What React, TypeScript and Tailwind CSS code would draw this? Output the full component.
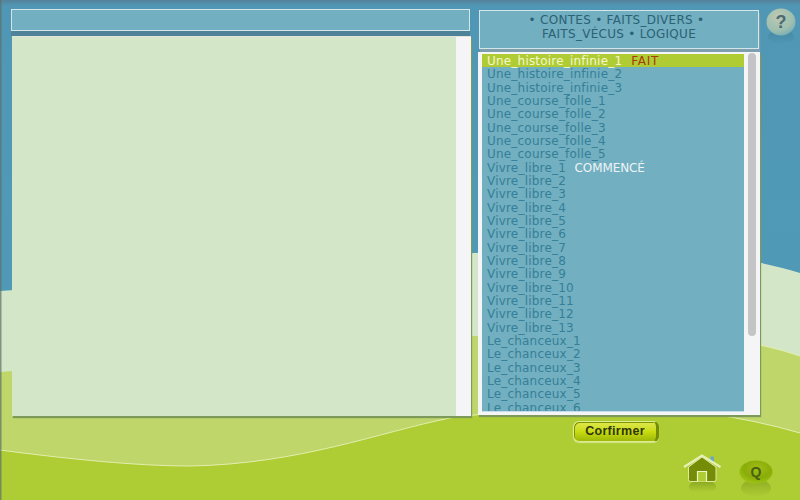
const items = [
  "Une_histoire_infinie_2","Une_histoire_infinie_3","Une_course_folle_1","Une_course_folle_2","Une_course_folle_3","Une_course_folle_4","Une_course_folle_5",
];
const items2 = [
  "Vivre_libre_2","Vivre_libre_3","Vivre_libre_4","Vivre_libre_5","Vivre_libre_6","Vivre_libre_7","Vivre_libre_8","Vivre_libre_9","Vivre_libre_10","Vivre_libre_11","Vivre_libre_12","Vivre_libre_13",
  "Le_chanceux_1","Le_chanceux_2","Le_chanceux_3","Le_chanceux_4","Le_chanceux_5","Le_chanceux_6",
];
const row = "h-[13.33px] leading-[15.5px] pl-[5px] whitespace-nowrap tracking-[0.2px]";

function Background() {
  return (
    <svg className="absolute inset-0" width="800" height="500" viewBox="0 0 800 500">
      <defs>
        <linearGradient id="top" x1="0" y1="0" x2="0" y2="1">
          <stop offset="0" stopColor="#55839a" />
          <stop offset="0.012" stopColor="#5097b5" />
          <stop offset="1" stopColor="#4f9bb9" />
        </linearGradient>
        <linearGradient id="edge" gradientUnits="userSpaceOnUse" x1="700" y1="0" x2="760" y2="0">
          <stop offset="0" stopColor="#e3eeae" stopOpacity="0" />
          <stop offset="1" stopColor="#e3eeae" stopOpacity="1" />
        </linearGradient>
      </defs>
      <rect width="800" height="500" fill="url(#top)" />
      <path d="M0 291 C160 280 330 258 475 253 C600 248 710 245 800 273 V500 H0 Z" fill="#d3e6c8" />
      <path d="M0 372 C160 360 330 337 475 336 C600 336 710 325 800 356 V500 H0 Z" fill="#bfd66a" />
      <path d="M475 336 C600 336 710 325 800 356" fill="none" stroke="url(#edge)" strokeWidth="1" />
      <path d="M0 450 C90 462 150 466 190 466 C300 464 380 432 450 418 C560 404 680 398 800 433 V500 H0 Z" fill="#aecd34" />
      <path d="M0 450 C90 462 150 466 190 466 C300 464 380 432 450 418 C560 404 680 398 800 433" fill="none" stroke="#e3eeae" strokeWidth="1" />
      <rect x="0" y="0" width="1.5" height="500" fill="#5f6f66" opacity="0.7" />
    </svg>
  );
}

function HelpIcon() {
  return (
    <svg width="34" height="40" viewBox="0 0 34 40" className="block">
      <defs>
        <radialGradient id="help" cx="0.4" cy="0.3" r="0.8">
          <stop offset="0" stopColor="#bcc9b3" />
          <stop offset="0.65" stopColor="#9dbfb0" />
          <stop offset="1" stopColor="#6fa7b5" />
        </radialGradient>
        <linearGradient id="helpShadow" x1="0" y1="0" x2="0" y2="1">
          <stop offset="0" stopColor="#41839e" stopOpacity="0.8" />
          <stop offset="1" stopColor="#41839e" stopOpacity="0" />
        </linearGradient>
      </defs>
      <ellipse cx="17" cy="29" rx="13" ry="7" fill="url(#helpShadow)" />
      <ellipse cx="17" cy="14" rx="14.5" ry="13.5" fill="url(#help)" />
      <text x="17" y="19.5" textAnchor="middle" fontSize="18" fontWeight="700" fill="#4c6a72" fontFamily="Liberation Sans, sans-serif">?</text>
    </svg>
  );
}

function HomeIcon() {
  return (
    <svg width="38" height="40" viewBox="0 0 38 40" className="block">
      <defs>
        <linearGradient id="homeShadow" x1="0" y1="0" x2="0" y2="1">
          <stop offset="0" stopColor="#8aa720" stopOpacity="0.9" />
          <stop offset="1" stopColor="#8aa720" stopOpacity="0" />
        </linearGradient>
      </defs>
      <rect x="6" y="28" width="27" height="10" rx="5" fill="url(#homeShadow)" />
      <rect x="27.5" y="2.5" width="3.5" height="5" fill="#6fa9c0" />
      <path d="M5.5 13 V25.5 Q5.5 27.5 7.5 27.5 H31 Q33 27.5 33 25.5 V13 L19 3 Z" fill="#748c06" stroke="#dfeaa0" strokeWidth="1" />
      <path d="M1 13 L19 1.5 L37.5 13" fill="none" stroke="#e6efb8" strokeWidth="2.2" />
      <path d="M14.5 27.5 V17.5 H23.5 V27.5" fill="#aecd34" stroke="#eef4c8" strokeWidth="1.2" />
    </svg>
  );
}

function QIcon() {
  return (
    <svg width="34" height="40" viewBox="0 0 34 40" className="block">
      <defs>
        <radialGradient id="q" cx="0.55" cy="0.35" r="0.7">
          <stop offset="0" stopColor="#a0bd18" />
          <stop offset="0.6" stopColor="#8aac08" />
          <stop offset="1" stopColor="#a2c81a" />
        </radialGradient>
        <linearGradient id="qShadow" x1="0" y1="0" x2="0" y2="1">
          <stop offset="0" stopColor="#8aa720" stopOpacity="0.9" />
          <stop offset="1" stopColor="#8aa720" stopOpacity="0" />
        </linearGradient>
      </defs>
      <ellipse cx="17" cy="28" rx="15" ry="9" fill="url(#qShadow)" />
      <ellipse cx="17" cy="12" rx="16.5" ry="11.5" fill="url(#q)" />
      <text x="17" y="16.5" textAnchor="middle" fontSize="14" fontWeight="700" fill="#47600e" fontFamily="Liberation Sans, sans-serif">Q</text>
    </svg>
  );
}

export default function App() {
  return (
    <div className="relative w-[800px] h-[500px] overflow-hidden font-['DejaVu_Sans',sans-serif]">
      <Background />
      <div className="relative flex items-start pl-[11px] pt-[9px]">
        <div className="w-[460px] mr-[7px] flex flex-col">
          <div className="w-[459px] h-[22px] bg-[#72afc0] border border-[#d5e6ea] shadow-[0_5px_0_#4e8299]" />
          <div className="mt-[5px] ml-[1px] h-[380px] flex bg-[#f5f5f8] border-t border-t-[#e2e4da] shadow-[1px_2px_1px_#7d9a5a]">
            <div className="w-[444px] bg-[#d3e6c8]" />
          </div>
        </div>
        <div className="w-[282px] flex flex-col">
          <div className="mt-[1px] h-[39px] ml-[1px] w-[280px] bg-[#72afc0] border border-[#d5e6ea] shadow-[1px_3px_1px_#7d9fae] text-center text-[12px] leading-[13.5px] text-[#2c6176] pt-[3px] tracking-[0.28px]">
            <div className="pr-[5px]">• CONTES • FAITS_DIVERS •</div>
            <div>FAITS_VÉCUS • LOGIQUE</div>
          </div>
          <div className="mt-[3px] h-[363px] flex bg-[#f5f5f8] pl-[4px] pt-[1px] shadow-[1px_2px_1px_#7d9a5a]">
            <div className="mt-[1px] w-[262px] h-[358px] overflow-hidden bg-[#72afc0] text-[12px] text-[#357f98] border-b border-[#c5dde8]">
              <div className={`${row} bg-[#b0cc34] text-[#f4f6d0]`}>
                Une_histoire_infinie_1<span className="ml-[9px] text-[#a83a04] tracking-[0.7px]">FAIT</span>
              </div>
              {items.map((t) => (
                <div key={t} className={row}>{t}</div>
              ))}
              <div className={row}>
                Vivre_libre_1<span className="ml-[8.5px] text-[#eef4f6] tracking-[-0.1px]">COMMENCÉ</span>
              </div>
              {items2.map((t) => (
                <div key={t} className={row}>{t}</div>
              ))}
            </div>
            <div className="ml-[4px] w-[8px] h-[283px] rounded-[4px] bg-[#c4c4c6]" />
          </div>
        </div>
      </div>
      <div className="absolute left-[573px] top-[421px] w-[86px] h-[21px] rounded-[6px] bg-gradient-to-b from-[#dfe84a] via-[#c9dc10] to-[#9db80a] border border-[#e0ec90] border-r-[3px] border-r-[#748c06] flex items-center justify-center font-['Liberation_Sans',sans-serif] font-bold text-[12.5px] text-[#2e360a] tracking-[0.3px] shadow-[0_1px_1px_#d5e48c,inset_1px_1px_0_#7f9408]">
        Corfirmer
      </div>
      <div className="absolute left-[764px] top-[8px]"><HelpIcon /></div>
      <div className="absolute left-[683px] top-[454px]"><HomeIcon /></div>
      <div className="absolute left-[739px] top-[460px]"><QIcon /></div>
    </div>
  );
}
